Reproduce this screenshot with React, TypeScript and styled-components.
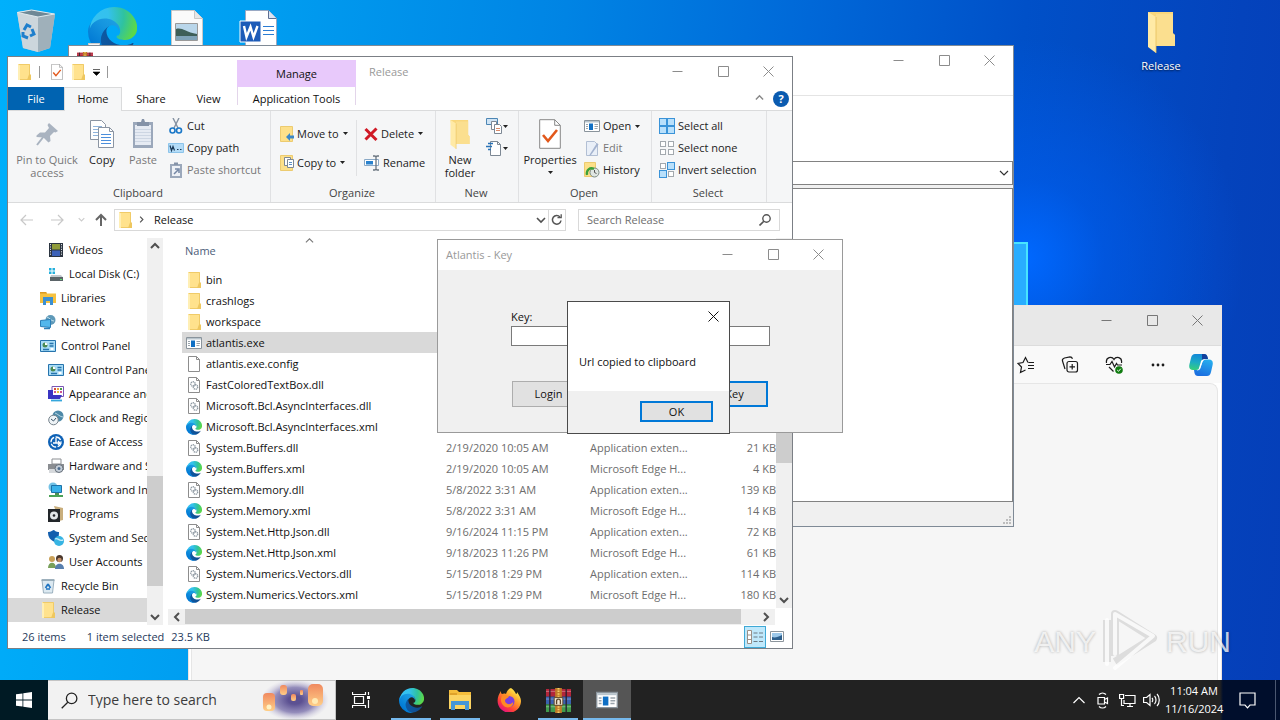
import React from "react";
import styled, { createGlobalStyle, css } from "styled-components";

const GlobalStyle = createGlobalStyle`
  *, *::before, *::after { box-sizing: border-box; }
  html, body { margin: 0; padding: 0; }
  body { font-family: "Open Sans", "Noto Sans", sans-serif; font-size: 11px; line-height: 16px; color: #111; }
  button, input, select { font: inherit; color: inherit; border-radius: 0; margin: 0; }
  button { border: 0; background: none; padding: 0; }
  svg { display: block; flex: none; }
`;

/* ---------- icons ---------- */

type IconProps = { size?: number };

const Svg = ({ w, h, vb, children }: { w: number; h: number; vb?: string; children: React.ReactNode }) => (
  <svg width={w} height={h} viewBox={vb ?? `0 0 ${w} ${h}`} fill="none" aria-hidden="true">
    {children}
  </svg>
);

const EdgeLogo = ({ size = 16 }: IconProps) => (
  <Svg w={size} h={size} vb="0 0 256 256">
    <defs>
      <linearGradient id="edgeA" x1="63" y1="177" x2="241" y2="177" gradientUnits="userSpaceOnUse">
        <stop offset="0" stopColor="#0c59a4" />
        <stop offset="1" stopColor="#114a8b" />
      </linearGradient>
      <linearGradient id="edgeB" x1="157" y1="100" x2="46" y2="222" gradientUnits="userSpaceOnUse">
        <stop offset="0" stopColor="#1b9de2" />
        <stop offset="0.3" stopColor="#1595df" />
        <stop offset="1" stopColor="#0078d4" />
      </linearGradient>
      <radialGradient id="edgeC" cx="26" cy="45" r="230" gradientUnits="userSpaceOnUse">
        <stop offset="0" stopColor="#35c1f1" />
        <stop offset="0.35" stopColor="#34c1ed" />
        <stop offset="0.7" stopColor="#2fc2a0" />
        <stop offset="1" stopColor="#5bd84a" />
      </radialGradient>
    </defs>
    <path
      fill="url(#edgeA)"
      d="M231 190a94 94 0 0 1-10 5 102 102 0 0 1-36 6c-47 0-89-32-89-75a32 32 0 0 1 17-28c-43 2-54 46-54 72 0 74 68 81 82 81 8 0 20-2 27-5l2 0a128 128 0 0 0 67-53 3 3 0 0 0-6-3Z"
    />
    <path
      fill="url(#edgeB)"
      d="M106 241a79 79 0 0 1-23-21 81 81 0 0 1 30-121c3-1 8-4 15-4a32 32 0 0 1 26 13 32 32 0 0 1 6 19c0-1 25-80-80-80-44 0-80 42-80 79a130 130 0 0 0 12 56 128 128 0 0 0 156 67 75 75 0 0 1-62-8Z"
    />
    <path
      fill="url(#edgeC)"
      d="M152 149c-1 1-3 3-3 6 0 3 2 6 5 8 15 10 42 9 42 9a60 60 0 0 0 31-9 62 62 0 0 0 30-53c0-23-8-38-11-45C226 24 183 0 136 0A128 128 0 0 0 8 126c1-37 37-66 80-66 4 0 24 0 42 10 16 8 25 19 31 29 6 11 7 24 7 30 0 5-3 13-8 20Z"
    />
  </Svg>
);

const FolderIcon = ({ size = 16 }: IconProps) => (
  <Svg w={size} h={size} vb="0 0 16 16">
    <path d="M2 0h12v11h1v5H2z" fill="#ffe28d" />
    <path d="M2.500 0.500h11v15h-11z" stroke="#f0cb68" />
    <path d="M13 10.500h2V16h-4z" fill="#eec75f" />
    <path d="M2 0l2 1.500V16H2z" fill="#ffefb5" />
  </Svg>
);

const OpenFolderLarge = ({ w, h }: { w: number; h: number }) => (
  <Svg w={w} h={h} vb="0 0 27 41">
    <path d="M0 0h25v21l2 2v11H5z" fill="#f9d77c" />
    <path d="M8 2h17v20l2 1v11H8z" fill="#fbdf8f" />
    <path d="M0 0l8 5v36l-8-6z" fill="#ffeaa6" />
    <path d="M8 5v36" stroke="#e7bf5c" strokeWidth="0.800" />
  </Svg>
);

const CheckDocIcon = ({ w, h }: { w: number; h: number }) => (
  <Svg w={w} h={h} vb="0 0 22 30">
    <path d="M0.700 0.700h15l5.600 5.600v23H0.700z" fill="#fff" stroke="#888" />
    <path d="M15.700 0.700v5.600h5.600" stroke="#888" />
    <path d="M4 16l5 6 9-11" stroke="#e2581b" strokeWidth="2.600" />
  </Svg>
);

const ExeIcon = ({ size = 16 }: IconProps) => (
  <Svg w={size} h={size} vb="0 0 16 16">
    <path d="M0.500 2.500h15v11H0.500z" fill="#fff" stroke="#8a949c" />
    <path d="M1 3h14v1.500H1z" fill="#b8c4cc" />
    <path d="M5 5.500h4v6.500H5z" fill="#0f6fc4" />
    <path d="M2 6.500h2M2 8.500h2M2 10.500h2M10.500 6.500h3.500M10.500 8.500h3.500M10.500 10.500h3" stroke="#9aa4ac" />
  </Svg>
);

const FileIcon = () => (
  <Svg w={16} h={16}>
    <path d="M2.500 0.500h8l3 3v12h-11z" fill="#fff" stroke="#8d8d8d" />
    <path d="M10.500 0.500v3h3" stroke="#8d8d8d" />
  </Svg>
);

const DllIcon = () => (
  <Svg w={16} h={16}>
    <path d="M2.500 0.500h8l3 3v12h-11z" fill="#fff" stroke="#8d8d8d" />
    <path d="M10.500 0.500v3h3" stroke="#8d8d8d" />
    <circle cx="7" cy="7" r="2.200" stroke="#8f9aa3" strokeDasharray="1.200 0.600" strokeWidth="1.400" />
    <circle cx="9.500" cy="10" r="2.200" stroke="#8f9aa3" strokeDasharray="1.200 0.600" strokeWidth="1.400" />
  </Svg>
);

const PinIcon = () => (
  <Svg w={24} h={24}>
    <path d="M14 1l9 8-2.500 1.500-1.500-0.500-4 4 0.500 5-2 1.500-5-5-7-0.500 0-1.500L5 10.500l5 0 4-4.500L12.500 3z" fill="#a9b3c0" />
    <path d="M9 14l-7 9" stroke="#a9b3c0" strokeWidth="2" />
  </Svg>
);

const CopyIcon = () => (
  <Svg w={26} h={30}>
    <path d="M1.500 1.500h11l4 4v15h-15z" fill="#fff" stroke="#8b95a3" />
    <path d="M4 7.500h9M4 10.500h9M4 13.500h9M4 16.500h9" stroke="#8fb4dc" />
    <path d="M9.500 8.500h11l4 4v16h-15z" fill="#fff" stroke="#8b95a3" />
    <path d="M20.500 8.500v4h4" stroke="#8b95a3" />
    <path d="M12 15.500h10M12 18.500h10M12 21.500h10M12 24.500h10" stroke="#4c8fdc" />
  </Svg>
);

const PasteIcon = () => (
  <Svg w={22} h={30}>
    <path d="M1 3h20v26H1z" fill="#9ba8bb" />
    <path d="M3 6h16v20H3z" fill="#e6ebf3" />
    <path d="M3 10.500h16M3 13.500h16M3 16.500h16M3 19.500h16M3 22.500h16" stroke="#cdd6e3" />
    <path d="M5 3h4l1-3h2l1 3h4v4H5z" fill="#8593a8" />
  </Svg>
);

const CutIcon = () => (
  <Svg w={16} h={16}>
    <path d="M5 0l5 10M11 0L6 10" stroke="#8592a2" strokeWidth="1.400" />
    <circle cx="4.500" cy="12.500" r="2.500" stroke="#1a78c8" strokeWidth="1.600" />
    <circle cx="11" cy="12.500" r="2.500" stroke="#1a78c8" strokeWidth="1.600" />
  </Svg>
);

const CopyPathIcon = () => (
  <Svg w={16} h={16}>
    <path d="M0.500 3.500h15v9H0.500z" fill="#b4dcf7" stroke="#8cc4ea" />
    <path d="M2 5.500l1.500 5 1.500-4 1.500 4M9 9.500h1.500M12 9.500h1.500" stroke="#1b3a57" strokeWidth="1.200" />
  </Svg>
);

const PasteShortcutIcon = () => (
  <Svg w={16} h={16}>
    <path d="M2 2h12v14H2z" fill="#9ba8bb" />
    <path d="M4 4h8v10H4z" fill="#eef1f6" />
    <path d="M6 0.500h4V3H6z" fill="#8593a8" />
    <path d="M6 12l4-4M7 7h4v4" stroke="#7487a5" strokeWidth="1.500" />
  </Svg>
);

const MoveToIcon = () => (
  <Svg w={14} h={16}>
    <path d="M0.500 0.500h12v15h-12z" fill="#fde08a" stroke="#eccb70" />
    <path d="M6 11l4-4v2.500h4v3h-4V15z" fill="#3b87c8" />
  </Svg>
);

const CopyToIcon = () => (
  <Svg w={14} h={16}>
    <path d="M0.500 0.500h12v15h-12z" fill="#fde08a" stroke="#eccb70" />
    <path d="M4.500 2.500h6v8h-6z" fill="#fff" stroke="#7d8894" />
    <path d="M7.500 4.500h6v8h-6z" fill="#fff" stroke="#7d8894" />
    <path d="M9 7.500h3M9 9.500h3" stroke="#5b8fc8" />
  </Svg>
);

const DeleteIcon = () => (
  <Svg w={14} h={16}>
    <path d="M1.500 3l11 11M12.500 2.500l-11 11" stroke="#d01a26" strokeWidth="3" />
  </Svg>
);

const RenameIcon = () => (
  <Svg w={16} h={16}>
    <path d="M0.500 4.500h14v6H0.500z" fill="#fff" stroke="#8aa9c6" />
    <path d="M2 6h7v3.500H2z" fill="#2a82cd" />
    <path d="M9 1h2l1 1 1-1h2M12 2v12M9 15h2l1-1 1 1h2" stroke="#6a7580" strokeWidth="1.300" />
  </Svg>
);

const NewItemIcon = () => (
  <Svg w={17} h={16}>
    <path d="M0.500 0.500h11v6H0.500z" fill="#cfe4f5" stroke="#4d86b4" />
    <path d="M5.500 3.500h5v8h-5z" fill="#fff" stroke="#7d8894" />
    <path d="M8.500 6.500h5l2 2v7h-7z" fill="#fff" stroke="#7d8894" />
    <path d="M10 10.500h4M10 12.500h4" stroke="#d98b6a" />
  </Svg>
);

const EasyAccessIcon = () => (
  <Svg w={17} h={16}>
    <path d="M4.500 1.500h7l3 3v11h-10z" fill="#fff" stroke="#7d8894" />
    <path d="M11.500 1.500v3h3" stroke="#7d8894" />
    <path d="M2 3.500h5M0 6.500h6M2 9.500h3" stroke="#2a73b8" strokeWidth="1.400" />
  </Svg>
);

const EditIcon = () => (
  <Svg w={16} h={16}>
    <path d="M2.500 1.500h8l3 3v11h-11z" fill="#e9eff8" stroke="#b2bfd4" />
    <path d="M13 3L6 14l-1 2 2-1L14.500 4.500z" fill="#a4b3cf" />
  </Svg>
);

const HistoryIcon = () => (
  <Svg w={16} h={16}>
    <path d="M0.500 0.500h11v14h-11z" fill="#fde08a" stroke="#eccb70" />
    <circle cx="10.500" cy="10.500" r="4.500" fill="#dfe6e2" stroke="#7d8b84" />
    <path d="M10.500 8v2.500l2 1" stroke="#555" />
    <path d="M3 13c-1-5 3-8 7-6" stroke="#3da13a" strokeWidth="2.400" />
  </Svg>
);

const GridIcon = ({ kind }: { kind: "all" | "none" | "invert" }) => {
  const on = (i: number) => kind === "all" || (kind === "invert" && (i === 1 || i === 2));
  const spots = [
    [0, 0],
    [8, 0],
    [0, 8],
    [8, 8],
  ];
  return (
    <Svg w={16} h={16}>
      {spots.map(([x, y], i) =>
        on(i) ? (
          <rect key={i} x={x + 0.5} y={y + 0.5} width="7" height="7" fill="#b9e0fb" stroke="#3a93d8" />
        ) : (
          <rect key={i} x={x + 1.5} y={y + 1.5} width="5" height="5" fill="#fff" stroke="#a3a9ae" />
        ),
      )}
    </Svg>
  );
};

const CaretDown = () => (
  <Svg w={5} h={3}>
    <path d="M0 0h5L2.500 3z" fill="#222" />
  </Svg>
);

const Chevron = ({ dir, size = 8, color = "#505050", width = 1.6 }: { dir: "up" | "down" | "left" | "right"; size?: number; color?: string; width?: number }) => {
  const d = { up: "M1 6l4-4 4 4", down: "M1 3l4 4 4-4", left: "M7 1L3 5l4 4", right: "M3 1l4 4-4 4" }[dir];
  return (
    <Svg w={size} h={size} vb="0 0 10 10">
      <path d={d} stroke={color} strokeWidth={width} />
    </Svg>
  );
};

const ArrowIcon = ({ dir, color }: { dir: "left" | "right" | "up"; color: string }) => {
  const d = { left: "M13 7H1M6 2L1 7l5 5", right: "M1 7h12M8 2l5 5-5 5", up: "M7 13V2M2 7l5-5 5 5" }[dir];
  return (
    <Svg w={14} h={14}>
      <path d={d} stroke={color} strokeWidth={dir === "up" ? 2 : 1.2} />
    </Svg>
  );
};

const RefreshIcon = () => (
  <Svg w={12} h={12}>
    <path d="M9 3a4.300 4.300 0 1 0 1 3.500" stroke="#555" strokeWidth="1.500" />
    <path d="M6.500 3.700h3.700V0.300" stroke="#555" strokeWidth="1.300" />
  </Svg>
);

const SearchIcon = ({ size = 12, color = "#555" }: { size?: number; color?: string }) => (
  <Svg w={size} h={size} vb="0 0 12 12">
    <circle cx="7.500" cy="4.500" r="3.700" stroke={color} strokeWidth={size > 12 ? 0.9 : 1.4} />
    <path d="M4.800 7.200L0.500 11.500" stroke={color} strokeWidth={size > 12 ? 0.9 : 1.6} />
  </Svg>
);

const NavGlyph = ({ kind }: { kind: string }) => {
  const art: Record<string, React.ReactNode> = {
    videos: (
      <>
        <path d="M1 1h14v14H1z" fill="#2b3440" />
        <path d="M4 2h8v5.500H4z" fill="#8f9b3b" />
        <path d="M4 8.500h8V14H4z" fill="#3d62b8" />
        <path d="M2.500 2v12M13.500 2v12" stroke="#d8dde2" strokeDasharray="1.200 1.200" />
      </>
    ),
    disk: (
      <>
        <path d="M1 2h2.500v2.500H1zM4.500 2H7v2.500H4.500zM1 5.500h2.500V8H1zM4.500 5.500H7V8H4.500z" fill="#26b0dc" />
        <path d="M3 9h10l2 2.500H2z" fill="#c2c8cc" />
        <path d="M2 11h13v4H2z" fill="#5b6468" />
        <path d="M12 13.500h2" stroke="#5be36c" />
      </>
    ),
    libraries: (
      <>
        <path d="M0 2h6l1 1.500h9V13H0z" fill="#f6c13f" />
        <path d="M0 2h6l1 1.500H0z" fill="#d99a24" />
        <path d="M3 7h10v8h-3v-4H6v4H3z" fill="#3b8fd2" />
      </>
    ),
    network: (
      <>
        <circle cx="10.500" cy="6" r="5" fill="#5f99b8" />
        <path d="M7 3c3 1 4 4 7 4" stroke="#bfe0ee" />
        <path d="M0.500 6.500l10-1v8l-10-1z" fill="#52b7ec" stroke="#2b7fb8" />
        <path d="M4 14.500h6" stroke="#2b7fb8" strokeWidth="1.500" />
      </>
    ),
    panel: (
      <>
        <path d="M0.500 2.500h15v11H0.500z" fill="#a8dcf7" stroke="#2673ac" />
        <circle cx="5" cy="7" r="2.500" fill="#4a8a54" />
        <path d="M5 7V4.500A2.500 2.500 0 0 1 7.500 7z" fill="#fff" />
        <path d="M9.500 5.500h4M9.500 8h4M3 11.500h6" stroke="#2673ac" strokeWidth="1.300" />
        <path d="M10.500 10h3v2h-3z" fill="#fff" />
      </>
    ),
    appearance: (
      <>
        <path d="M4 0.500h11.500v10H4z" fill="#fff" stroke="#7a57b5" />
        <path d="M6 2h2v2H6z" fill="#d94a3a" />
        <path d="M9 2h2v2H9z" fill="#e8a33a" />
        <path d="M12 2h2v2h-2z" fill="#4a9c4a" />
        <path d="M6 5h2v2H6zM12 5h2v2h-2z" fill="#d0558f" />
        <path d="M9 5h2v2H9z" fill="#e8c33a" />
        <path d="M0 4h5v5h9l-2 4H0z" fill="#3a35c2" />
        <path d="M3 14.500h11" stroke="#35a7dc" strokeWidth="1.800" />
      </>
    ),
    clock: (
      <>
        <circle cx="10" cy="6" r="5.500" fill="#4d89a8" />
        <path d="M7 3c3 1 5 4 8 4" stroke="#b7d7e4" />
        <circle cx="5.500" cy="10" r="4.800" fill="#eef3f6" stroke="#76838c" />
        <path d="M3 9l2.500 2 2.500-3" stroke="#3c5468" />
      </>
    ),
    ease: (
      <>
        <circle cx="8" cy="8" r="8" fill="#0f62b6" />
        <circle cx="8" cy="8" r="5" stroke="#fff" strokeWidth="1.300" strokeDasharray="6 1.500" />
        <path d="M8 4v5M5 9h7l-2-2M12 9l-2 2" stroke="#fff" strokeWidth="1.300" />
      </>
    ),
    hardware: (
      <>
        <path d="M4 1h9v5H4z" fill="#fff" stroke="#8c8f93" />
        <path d="M0 6h16v6H0z" fill="#8a8d91" />
        <path d="M1 11h9v4H1z" fill="#d6d9dc" />
        <circle cx="11" cy="10.500" r="4" fill="#c5ced8" stroke="#67707a" />
        <circle cx="11" cy="10.500" r="1.500" fill="#4c6b8d" />
      </>
    ),
    internet: (
      <>
        <circle cx="5" cy="5" r="4.500" fill="#73c2e6" />
        <path d="M3.500 3.500h10v7h-10z" fill="#38b2ea" stroke="#1d72a8" />
        <path d="M7 11h4v2H7z" fill="#4d8f56" />
        <path d="M1 14h14" stroke="#4aa356" strokeWidth="2" />
      </>
    ),
    programs: (
      <>
        <path d="M6 0l9 2v12l-4 1z" fill="#c9ae7c" />
        <path d="M0 3h12v13H0z" fill="#22262a" />
        <circle cx="6" cy="9.500" r="4" fill="#e3e7ea" />
        <circle cx="6" cy="9.500" r="1.300" fill="#22262a" />
      </>
    ),
    security: (
      <>
        <path d="M0 2c3 0 5-2 6-2 2 2 4 2 5 2 0 5-1 8-4 10C2 10 0 7 0 2z" fill="#135fae" />
        <circle cx="11" cy="11" r="5" fill="#37b4e3" />
        <path d="M7 9c3-2 4 3 8 1" stroke="#c8eefa" strokeWidth="1.400" />
      </>
    ),
    users: (
      <>
        <circle cx="4" cy="5" r="3" fill="#caa158" />
        <path d="M0 14c0-7 8-7 8 0z" fill="#79a05a" />
        <circle cx="11.500" cy="4.500" r="3.500" fill="#4a372c" />
        <circle cx="11.500" cy="6" r="2.200" fill="#c48f68" />
        <path d="M7 15c0-7 9-7 9 0z" fill="#587fae" />
      </>
    ),
    recycle: (
      <>
        <path d="M2 2h12l-1.500 13h-9z" fill="#dce9f1" stroke="#9bb0be" />
        <path d="M1.500 2h13" stroke="#8da3b1" strokeWidth="1.500" />
        <path d="M8 6l2.500 4M10 11H6M5.500 10L8 6" stroke="#2175c2" strokeWidth="1.700" />
      </>
    ),
  };
  if (kind === "folder") return <FolderIcon />;
  return (
    <Svg w={16} h={16}>
      {art[kind]}
    </Svg>
  );
};

const WinRarIcon = ({ size = 26 }: IconProps) => (
  <Svg w={size} h={size} vb="0 0 26 26">
    <path d="M0 1h26v8H0z" fill="#b3263a" />
    <path d="M0 9h26v8H0z" fill="#3a62b0" />
    <path d="M0 17h26v8H0z" fill="#3f9a4c" />
    <path d="M0 3.500h26M0 11.500h26M0 19.500h26" stroke="#fff" strokeOpacity="0.350" />
    <path d="M4 1v24M21 1v24" stroke="#2a1f30" strokeWidth="1.400" />
    <path d="M9.500 0h7v26h-7z" fill="#c07a28" />
    <path d="M13 0v9M13 19v7" stroke="#f4cf6a" strokeWidth="2" strokeDasharray="1.500 1.200" />
    <path d="M8.500 10h9v8h-9z" fill="#f0e6d2" stroke="#5d4526" />
    <path d="M11 17v-3.500a2 2 0 0 1 4 0V17" stroke="#5d4526" strokeWidth="1.400" />
  </Svg>
);

const FirefoxIcon = () => (
  <Svg w={24} h={24}>
    <defs>
      <linearGradient id="foxBody" x1="20" y1="2" x2="5" y2="22" gradientUnits="userSpaceOnUse">
        <stop offset="0" stopColor="#fff14f" />
        <stop offset="0.400" stopColor="#ff9a28" />
        <stop offset="0.750" stopColor="#ff4038" />
        <stop offset="1" stopColor="#e3157c" />
      </linearGradient>
    </defs>
    <path d="M14 0c3 2 4 4 5 6 1 0 1-1 1-2 2 3 4 6 4 9a11.700 11.700 0 0 1-23.400 0C0.500 9 2 6 4 3c0 2 0 2 1 3 1 0 2-1 4 0 1-3 2-5 5-6z" fill="url(#foxBody)" />
    <circle cx="12" cy="13.500" r="5.500" fill="#7b3fe0" />
    <path d="M5 8c3-2 5 0 7 0-1 3-4 2-4 5 1 4 6 4 8 1 1 5-6 7-9 4-3-2-4-7-2-10z" fill="#ff8a25" />
  </Svg>
);

const ExplorerTaskIcon = () => (
  <Svg w={22} h={22}>
    <path d="M0 1h8l2 2h12v17H0z" fill="#f5bd3b" />
    <path d="M0 6h22v14H0z" fill="#fcd462" />
    <path d="M2 12h18v9h-4v-5H6v5H2z" fill="#4596d8" />
    <path d="M1 5h7" stroke="#c9861a" />
  </Svg>
);

const LanternArt = () => (
  <Svg w={68} h={38}>
    <defs>
      <radialGradient id="nightGlow">
        <stop offset="0.200" stopColor="#5c5192" />
        <stop offset="0.600" stopColor="#8a82b5" stopOpacity="0.900" />
        <stop offset="1" stopColor="#cfcbe0" stopOpacity="0" />
      </radialGradient>
      <linearGradient id="lantern" x1="0" y1="0" x2="0" y2="1">
        <stop offset="0" stopColor="#f0895f" />
        <stop offset="1" stopColor="#ffcf87" />
      </linearGradient>
    </defs>
    <ellipse cx="34" cy="19" rx="34" ry="21" fill="url(#nightGlow)" />
    <rect x="2" y="12" width="12" height="18" rx="4" fill="url(#lantern)" />
    <rect x="19" y="4" width="7" height="10" rx="3" fill="url(#lantern)" />
    <rect x="30" y="13" width="5" height="7" rx="2" fill="url(#lantern)" />
    <rect x="39" y="9" width="3" height="5" rx="1" fill="url(#lantern)" />
    <rect x="47" y="3" width="15" height="22" rx="5" fill="url(#lantern)" />
    <circle cx="8" cy="26" r="2.500" fill="#fff3c4" />
    <circle cx="54" cy="20" r="3" fill="#ffeab4" />
  </Svg>
);

/* ---------- desktop ---------- */

const Screen = styled.div`
  display: grid;
  grid-template-rows: minmax(0, 1fr) 40px;
  height: 100vh;
  overflow: hidden;
`;

const Desktop = styled.main`
  position: relative;
  overflow: hidden;
  background:
    radial-gradient(circle at 80% 38%, #0068ff 0, rgba(0, 94, 240, 0.6) 80px, rgba(0, 80, 220, 0) 220px),
    linear-gradient(96deg, #00b0fb 0%, #009df0 20%, #0084e4 42%, #0068d8 60%, #0050c8 76%, #0443bc 92%, #053eb8 100%);
`;

const WallpaperPane = styled.div`
  position: absolute;
  left: 900px;
  top: 242px;
  width: 128px;
  height: 120px;
  background: #29adff;
  border: 2px solid #48e4ff;
`;

const Shortcut = styled.button<{ $x: number; $y: number }>`
  position: absolute;
  left: ${(p) => p.$x}px;
  top: ${(p) => p.$y}px;
  width: 72px;
  display: flex;
  flex-direction: column;
  align-items: center;
  gap: 5px;
  color: #fff;
  text-shadow: 0 1px 2px rgba(0, 0, 0, 0.7);
`;

const ShortcutArrow = styled.span`
  position: absolute;
  left: 12px;
  bottom: 0;
  width: 12px;
  height: 13px;
  background: #f4f4f4;
  border: 1px solid #c9c9c9;
`;

const Window = styled.section<{ $x: number; $y: number; $w: number; $h: number; $border: string }>`
  position: absolute;
  left: ${(p) => p.$x}px;
  top: ${(p) => p.$y}px;
  width: ${(p) => p.$w}px;
  height: ${(p) => p.$h}px;
  display: flex;
  flex-direction: column;
  background: #fff;
  border: 1px solid ${(p) => p.$border};
`;

const TitleBar = styled.header`
  display: flex;
  align-items: stretch;
  height: 30px;
  flex: none;
`;

const TitleText = styled.h1<{ $pad: number }>`
  flex: 1;
  align-self: center;
  margin: 0;
  padding-left: ${(p) => p.$pad}px;
  font-size: 11px;
  line-height: 16px;
  font-weight: 400;
  color: #999;
`;

const Spacer = styled.div`
  flex: 1;
`;

const ControlButton = styled.button<{ $w?: number }>`
  width: ${(p) => p.$w ?? 46}px;
  height: 28px;
  padding-right: 1px;
  display: grid;
  place-items: center;
`;

const CloseGlyph = ({ color }: { color: string }) => (
  <Svg w={11} h={11}>
    <path d="M0.500 0.500l10 10M10.500 0.500l-10 10" stroke={color} />
  </Svg>
);

const WindowControls = ({ color = "#8c8c8c" }: { color?: string }) => (
  <>
    <ControlButton aria-label="Minimize">
      <Svg w={11} h={11}>
        <path d="M0.500 5.500h10" stroke={color} />
      </Svg>
    </ControlButton>
    <ControlButton aria-label="Maximize" $w={45}>
      <Svg w={11} h={11}>
        <path d="M0.500 0.500h10v10h-10z" stroke={color} />
      </Svg>
    </ControlButton>
    <ControlButton aria-label="Close">
      <CloseGlyph color={color} />
    </ControlButton>
  </>
);

/* ---------- browser window ---------- */

const BrowserChrome = styled.div`
  display: flex;
  height: 39px;
  flex: none;
  background: #e8e8e8;
`;

const BrowserTools = styled.div`
  display: flex;
  justify-content: flex-end;
  height: 38px;
  flex: none;
  background: #f9f9f9;
  border-top: 1px solid #dcdcdc;
`;

const ToolButton = styled.button<{ $w?: number }>`
  width: ${(p) => p.$w ?? 44}px;
  display: grid;
  place-items: center;
`;

const BrowserPage = styled.div`
  flex: 1;
  margin: 0 3px 0 2px;
  background: #f6f6f6;
  border: 1px solid #e6e6e6;
  border-bottom: 0;
  border-radius: 8px 8px 0 0;
`;

const BrowserWindow = () => (
  <Window aria-label="Browser" $x={188} $y={305} $w={1034} $h={380} $border="#eee4e0">
    <BrowserChrome>
      <Spacer />
      <WindowControls color="#777" />
    </BrowserChrome>
    <BrowserTools>
      <ToolButton aria-label="Favorites">
        <Svg w={18} h={18}>
          <path d="M11 6.500L8.500 1.500 6 6.500l-5 1L4.500 11l-1 5.500L8.500 14M11.500 6.500H17M11 9.500h6M11 12.500h6" stroke="#1c1c1c" strokeWidth="1.200" />
        </Svg>
      </ToolButton>
      <ToolButton aria-label="Collections">
        <Svg w={18} h={18}>
          <path d="M4 13L1.500 5C1 3.500 2 2.500 3.500 2L9 0.800c1.500 0 2 0.500 2.500 2" stroke="#1c1c1c" strokeWidth="1.200" />
          <rect x="6" y="5.500" width="10.500" height="10.500" rx="2" stroke="#1c1c1c" strokeWidth="1.200" />
          <path d="M11.200 8v5.500M8.500 10.800H14" stroke="#1c1c1c" strokeWidth="1.200" />
        </Svg>
      </ToolButton>
      <ToolButton aria-label="Browser essentials">
        <Svg w={18} h={18}>
          <path d="M1.500 7C0.500 1 7 0 9 3.500 11 0 17.500 1 16.500 7M4 11l4.500 4.500M1 8.500h4l2-3 2.500 5.500 2-3.500 1 1.500H17" stroke="#1c1c1c" strokeWidth="1.200" />
          <circle cx="14" cy="14" r="3.800" fill="#107c10" />
          <path d="M12.200 14l1.300 1.300 2.300-2.600" stroke="#fff" />
        </Svg>
      </ToolButton>
      <ToolButton aria-label="Settings and more">
        <Svg w={14} h={4}>
          <circle cx="2" cy="2" r="1.400" fill="#1c1c1c" />
          <circle cx="7" cy="2" r="1.400" fill="#1c1c1c" />
          <circle cx="12" cy="2" r="1.400" fill="#1c1c1c" />
        </Svg>
      </ToolButton>
      <ToolButton $w={41} aria-label="Copilot">
        <Svg w={24} h={22}>
          <defs>
            <linearGradient id="copA" x1="6" y1="0" x2="4" y2="16" gradientUnits="userSpaceOnUse">
              <stop offset="0" stopColor="#1388d8" />
              <stop offset="0.500" stopColor="#1cabc4" />
              <stop offset="1" stopColor="#37cf7a" />
            </linearGradient>
            <linearGradient id="copB" x1="20" y1="4" x2="14" y2="22" gradientUnits="userSpaceOnUse">
              <stop offset="0" stopColor="#28b5f0" />
              <stop offset="1" stopColor="#1b6fe0" />
            </linearGradient>
          </defs>
          <path d="M6 0h9c2 0 3 1 3.500 3l0.500 2h-3c-2 0-3 1-3.500 3L11 13c-0.500 2-2 3-4 3H4c-3 0-4.500-2-3.500-6L2 4c0.800-3 2-4 4-4z" fill="url(#copA)" />
          <path d="M18 22H9c-2 0-3-1-3.500-3L5 16h3c2 0 3-1 3.500-3L13 9c0.500-2 2-3.500 4-3.500h3c3 0 4.500 2 3.500 6L22 18c-0.800 3-2 4-4 4z" fill="url(#copB)" />
          <path d="M13 0h2c2 0 3 1 3.500 3l0.500 2h-3c-1.500 0-2.500 0.500-3 2z" fill="#123f9c" />
          <path d="M14.500 5.500c-2 0-2.500 1.500-3 3.500l-1.500 5c-0.300 1.500-0.800 2-2.500 2.500 3 0 3.800-1.500 4.300-3.500l1.500-4.500c0.500-1.500 1-2.500 2.200-3z" fill="#fff" />
        </Svg>
      </ToolButton>
    </BrowserTools>
    <BrowserPage />
  </Window>
);

/* ---------- archive window ---------- */

const ArchiveMenu = styled.div`
  flex: none;
  height: 20px;
  border-bottom: 1px solid #e4e4e4;
`;

const ArchiveTools = styled.div`
  flex: none;
  height: 65px;
`;

const PathSelectWrap = styled.div`
  position: relative;
  flex: none;
  height: 27px;
  padding-bottom: 4px;
  background: #f0f0f0;
`;

const PathSelect = styled.select`
  appearance: none;
  display: block;
  width: 100%;
  height: 24px;
  background: #fff;
  border: 1px solid #828282;
`;

const SelectArrow = styled.span`
  position: absolute;
  right: 4px;
  top: 7px;
  pointer-events: none;
`;

const ArchiveList = styled.div`
  flex: 1;
  border: 1px solid #828282;
`;

const ArchiveStatus = styled.footer`
  flex: none;
  height: 24px;
  display: flex;
  justify-content: flex-end;
  align-items: flex-end;
  padding: 2px;
  background: #f0f0f0;
`;

const ArchiveTitle = styled(TitleBar)`
  padding-left: 8px;
`;

const TitleIcon = styled.span`
  padding-top: 6px;
`;

const ArchiveWindow = () => (
  <Window aria-label="Archive" $x={68} $y={45} $w={946} $h={482} $border="#7f8a96">
    <ArchiveTitle>
      <TitleIcon>
        <WinRarIcon size={16} />
      </TitleIcon>
      <Spacer />
      <WindowControls />
    </ArchiveTitle>
    <ArchiveMenu />
    <ArchiveTools />
    <PathSelectWrap>
      <PathSelect aria-label="Path" />
      <SelectArrow>
        <Chevron dir="down" size={10} color="#333" width={1.2} />
      </SelectArrow>
    </PathSelectWrap>
    <ArchiveList />
    <ArchiveStatus>
      <Svg w={8} h={8}>
        <path d="M6 0h2v2H6zM3 3h2v2H3zM6 3h2v2H6zM0 6h2v2H0zM3 6h2v2H3zM6 6h2v2H6z" fill="#bdbdbd" />
      </Svg>
    </ArchiveStatus>
  </Window>
);

/* ---------- file explorer ---------- */

const QuickAccess = styled.div`
  width: 229px;
  flex: none;
  display: flex;
  align-items: center;
  gap: 7px;
  padding-left: 8px;
`;

const QuickRule = styled.span<{ $after?: number }>`
  width: 1px;
  height: 12px;
  margin-right: ${(p) => p.$after ?? 0}px;
  background: #999;
`;

const Manage = styled.div`
  width: 119px;
  align-self: flex-end;
  height: 27px;
  padding-top: 1px;
  line-height: 26px;
  text-align: center;
  background: #e8c9fb;
`;

const TabRow = styled.nav`
  flex: none;
  display: flex;
  height: 23px;
`;

const tabBase = css<{ $w: number }>`
  width: ${(p) => p.$w}px;
  text-align: center;
  line-height: 22px;
`;

const FileTab = styled.button<{ $w: number }>`
  ${tabBase}
  background: #0063b1;
  color: #fff;
`;

const Tab = styled.button<{ $w: number; $active?: boolean }>`
  ${tabBase}
  ${(p) =>
    p.$active &&
    css`
      height: 24px;
      background: #f5f6f7;
      border: 1px solid #dadbdc;
      border-bottom: 0;
      z-index: 1;
      line-height: 20px;
      padding-bottom: 1px;
    `}
`;

const ToolTab = styled.button<{ $w: number }>`
  ${tabBase}
  height: 18px;
  padding-top: 6px;
  line-height: 12px;
  border: 1px solid #e3d5ea;
  border-width: 0 1px;
`;

const RibbonToggle = styled.button`
  width: 28px;
  display: grid;
  place-items: center;
`;

const HelpButton = styled.button`
  width: 16px;
  height: 16px;
  align-self: center;
  margin-right: 3px;
  border-radius: 8px;
  background: #0a5bb0;
  color: #fff;
  font-weight: 700;
`;

const Ribbon = styled.div`
  flex: none;
  display: flex;
  height: 93px;
  background: #f5f6f7;
  border: 1px solid #dadbdc;
  border-width: 1px 0;
`;

const Group = styled.section<{ $w: number }>`
  width: ${(p) => p.$w}px;
  flex: none;
  display: flex;
  flex-direction: column;
  border-right: 1px solid #e0e1e3;
`;

const GroupBody = styled.div<{ $pad: number }>`
  flex: 1;
  display: flex;
  padding-left: ${(p) => p.$pad}px;
`;

const GroupLabel = styled.h2`
  margin: 0;
  height: 19px;
  padding-right: 2px;
  font-size: 11px;
  font-weight: 400;
  line-height: 20px;
  text-align: center;
  color: #444;
`;

const BigButton = styled.button<{ $w: number }>`
  width: ${(p) => p.$w}px;
  display: flex;
  flex-direction: column;
  align-items: center;
  padding-top: 8px;
  line-height: 13px;
  color: #222;
  &:disabled {
    color: #777;
  }
`;

const BigIcon = styled.span`
  height: 34px;
  display: grid;
  align-items: center;
  padding-bottom: 4px;
`;

const BigCaret = styled.span`
  padding-top: 5px;
`;

const SmallColumn = styled.div<{ $w?: number; $row: number; $top: number }>`
  ${(p) => (p.$w ? `width: ${p.$w}px;` : "flex: 1;")}
  display: grid;
  grid-auto-rows: ${(p) => p.$row}px;
  align-content: start;
  padding: ${(p) => p.$top}px 0 0 4px;
`;

const RibbonRule = styled.span`
  width: 1px;
  height: 56px;
  margin: 9px 3px 0 0;
  background: #e0e1e3;
`;

const SmallButton = styled.button`
  display: flex;
  align-items: center;
  gap: 3px;
  white-space: nowrap;
  color: #222;
  &:disabled {
    color: #777;
  }
`;

const IconMenuButton = styled(SmallButton)`
  gap: 0;
`;

const CaretBox = styled.span`
  padding-left: 1px;
`;

const AddressRow = styled.div`
  flex: none;
  display: flex;
  align-items: center;
  height: 35px;
  padding: 0 12px 2px 4px;
`;

const NavButton = styled.button<{ $w: number }>`
  width: ${(p) => p.$w}px;
  height: 22px;
  display: grid;
  place-items: center;
`;

const AddressBox = styled.div`
  flex: 1;
  display: flex;
  align-items: center;
  height: 22px;
  margin-left: 3px;
  padding-left: 2px;
  border: 1px solid #d9d9d9;
`;

const Crumb = styled.button`
  padding: 0 5px;
`;

const RefreshButton = styled(NavButton)`
  height: 20px;
  border-left: 1px solid #d9d9d9;
`;

const SearchBox = styled.label`
  width: 202px;
  height: 22px;
  margin-left: 12px;
  padding: 0 8px;
  display: flex;
  align-items: center;
  border: 1px solid #d9d9d9;
`;

const PlainInput = styled.input<{ $size: number; $color: string }>`
  flex: 1;
  min-width: 0;
  padding: 0;
  border: 0;
  outline: 0;
  background: none;
  font-size: ${(p) => p.$size}px;
  &::placeholder {
    color: ${(p) => p.$color};
    opacity: 1;
  }
`;

const Content = styled.div`
  flex: 1;
  min-height: 0;
  display: flex;
`;

const Sidebar = styled.nav`
  width: 139px;
  overflow: hidden;
`;

const SideItem = styled.a<{ $level: number; $current?: boolean }>`
  display: flex;
  align-items: center;
  gap: 5px;
  height: 24px;
  padding-left: ${(p) => (p.$level === 1 ? 32 : 40)}px;
  white-space: nowrap;
  color: #111;
  text-decoration: none;
  background: ${(p) => (p.$current ? "#d9d9d9" : "none")};
`;

const VScroll = styled.div<{ $before: number }>`
  width: 16px;
  display: grid;
  grid-template-rows: 17px ${(p) => p.$before}fr auto 1fr 17px;
  justify-items: center;
  align-items: center;
  background: #f0f0f0;
`;

const VThumb = styled.span<{ $h: number }>`
  grid-row: 3;
  width: 16px;
  height: ${(p) => p.$h}px;
  background: #cdcdcd;
`;

const EndSlot = styled.span`
  grid-row: 5;
`;

const Listing = styled.div`
  flex: 1;
  min-width: 0;
  display: flex;
  flex-direction: column;
  padding-left: 5px;
`;

const ListBody = styled.div`
  display: flex;
  height: 370px;
`;

const TableWrap = styled.div`
  flex: 1;
  min-width: 0;
  padding-left: 14px;
  overflow: hidden;
`;

const Table = styled.table`
  width: 100%;
  table-layout: fixed;
  border-collapse: collapse;
  white-space: nowrap;
`;

const Th = styled.th<{ $w?: number }>`
  ${(p) => p.$w && `width: ${p.$w}px;`}
  height: 31px;
  padding: 0 0 5px 3px;
  text-align: left;
  font-weight: 400;
  color: #4c607a;
`;

const SortMark = styled.span`
  position: absolute;
  left: 305px;
  top: 237px;
`;

const Tr = styled.tr<{ $selected?: boolean }>`
  height: 21px;
  background: ${(p) => (p.$selected ? "#d9d9d9" : "none")};
`;

const Td = styled.td<{ $right?: boolean }>`
  height: 21px;
  padding: 0 0 0 4px;
  line-height: 16px;
  overflow: hidden;
  color: #6d6d6d;
  text-align: ${(p) => (p.$right ? "right" : "left")};
`;

const FileName = styled.span`
  display: flex;
  align-items: center;
  gap: 4px;
  color: #111;
`;

const HScroll = styled.div`
  height: 16px;
  margin: 1px 17px 0 0;
  display: flex;
  background: #f0f0f0;
`;

const HEnd = styled.span<{ $w: number; $right?: boolean }>`
  width: ${(p) => p.$w}px;
  display: grid;
  align-items: center;
  justify-items: ${(p) => (p.$right ? "end" : "center")};
  padding-right: ${(p) => (p.$right ? 4 : 0)}px;
`;

const HThumb = styled.span`
  flex: 1;
  height: 15px;
  background: #cdcdcd;
`;

const StatusBar = styled.footer`
  flex: none;
  height: 23px;
  display: flex;
  align-items: center;
  padding: 0 4px 0 14px;
  color: #1e395b;
`;

const StatusText = styled.span<{ $gap: number }>`
  margin-right: ${(p) => p.$gap}px;
`;

const ViewButton = styled.button<{ $active?: boolean }>`
  width: 22px;
  height: 22px;
  display: grid;
  place-items: center;
  background: ${(p) => (p.$active ? "#bfe8fb" : "none")};
  border: ${(p) => (p.$active ? "1px solid #3fa9d6" : "0")};
`;

const navItems: [string, string, number][] = [
  ["Videos", "videos", 2],
  ["Local Disk (C:)", "disk", 2],
  ["Libraries", "libraries", 1],
  ["Network", "network", 1],
  ["Control Panel", "panel", 1],
  ["All Control Panel Items", "panel", 2],
  ["Appearance and Personalization", "appearance", 2],
  ["Clock and Region", "clock", 2],
  ["Ease of Access", "ease", 2],
  ["Hardware and Sound", "hardware", 2],
  ["Network and Internet", "internet", 2],
  ["Programs", "programs", 2],
  ["System and Security", "security", 2],
  ["User Accounts", "users", 2],
  ["Recycle Bin", "recycle", 1],
  ["Release", "folder", 1],
];

type FileRow = { name: string; kind: "folder" | "exe" | "file" | "dll" | "xml"; date?: string; size?: string };

const files: FileRow[] = [
  { name: "bin", kind: "folder" },
  { name: "crashlogs", kind: "folder" },
  { name: "workspace", kind: "folder" },
  { name: "atlantis.exe", kind: "exe" },
  { name: "atlantis.exe.config", kind: "file" },
  { name: "FastColoredTextBox.dll", kind: "dll" },
  { name: "Microsoft.Bcl.AsyncInterfaces.dll", kind: "dll" },
  { name: "Microsoft.Bcl.AsyncInterfaces.xml", kind: "xml" },
  { name: "System.Buffers.dll", kind: "dll", date: "2/19/2020 10:05 AM", size: "21 KB" },
  { name: "System.Buffers.xml", kind: "xml", date: "2/19/2020 10:05 AM", size: "4 KB" },
  { name: "System.Memory.dll", kind: "dll", date: "5/8/2022 3:31 AM", size: "139 KB" },
  { name: "System.Memory.xml", kind: "xml", date: "5/8/2022 3:31 AM", size: "14 KB" },
  { name: "System.Net.Http.Json.dll", kind: "dll", date: "9/16/2024 11:15 PM", size: "72 KB" },
  { name: "System.Net.Http.Json.xml", kind: "xml", date: "9/18/2023 11:26 PM", size: "61 KB" },
  { name: "System.Numerics.Vectors.dll", kind: "dll", date: "5/15/2018 1:29 PM", size: "114 KB" },
  { name: "System.Numerics.Vectors.xml", kind: "xml", date: "5/15/2018 1:29 PM", size: "180 KB" },
];

const fileIcons = {
  folder: <FolderIcon />,
  exe: <ExeIcon />,
  file: <FileIcon />,
  dll: <DllIcon />,
  xml: <EdgeLogo />,
};

const Small = ({ icon, label, caret, disabled }: { icon: React.ReactNode; label: string; caret?: boolean; disabled?: boolean }) => (
  <SmallButton disabled={disabled}>
    {icon}
    {label}
    {caret && (
      <CaretBox>
        <CaretDown />
      </CaretBox>
    )}
  </SmallButton>
);

const Explorer = () => (
  <Window aria-label="Release" $x={7} $y={56} $w={786} $h={593} $border="#7b7f85">
    <TitleBar>
      <QuickAccess>
        <FolderIcon />
        <QuickRule $after={4} />
        <CheckDocIcon w={12} h={16} />
        <FolderIcon />
        <Svg w={7} h={7}>
          <path d="M0 0.500h7M0 3h7L3.500 6.500z" stroke="#000" strokeWidth="0.600" fill="#000" />
        </Svg>
        <QuickRule />
      </QuickAccess>
      <Manage>Manage</Manage>
      <TitleText $pad={13}>Release</TitleText>
      <WindowControls />
    </TitleBar>
    <TabRow>
      <FileTab $w={56}>File</FileTab>
      <Tab $w={58} $active>
        Home
      </Tab>
      <Tab $w={58}>Share</Tab>
      <Tab $w={57}>View</Tab>
      <ToolTab $w={119}>Application Tools</ToolTab>
      <Spacer />
      <RibbonToggle aria-label="Collapse ribbon">
        <Chevron dir="up" size={9} color="#888" />
      </RibbonToggle>
      <HelpButton aria-label="Help">?</HelpButton>
    </TabRow>
    <Ribbon>
      <Group $w={263}>
        <GroupBody $pad={4}>
          <BigButton $w={70} disabled>
            <BigIcon>
              <PinIcon />
            </BigIcon>
            <span>Pin to Quick</span>
            <span>access</span>
          </BigButton>
          <BigButton $w={40}>
            <BigIcon>
              <CopyIcon />
            </BigIcon>
            Copy
          </BigButton>
          <BigButton $w={42} disabled>
            <BigIcon>
              <PasteIcon />
            </BigIcon>
            Paste
          </BigButton>
          <SmallColumn $row={22} $top={4}>
            <Small icon={<CutIcon />} label="Cut" />
            <Small icon={<CopyPathIcon />} label="Copy path" />
            <Small icon={<PasteShortcutIcon />} label="Paste shortcut" disabled />
          </SmallColumn>
        </GroupBody>
        <GroupLabel>Clipboard</GroupLabel>
      </Group>
      <Group $w={165}>
        <GroupBody $pad={5}>
          <SmallColumn $w={80} $row={29} $top={8}>
            <Small icon={<MoveToIcon />} label="Move to" caret />
            <Small icon={<CopyToIcon />} label="Copy to" caret />
          </SmallColumn>
          <RibbonRule />
          <SmallColumn $row={29} $top={8}>
            <Small icon={<DeleteIcon />} label="Delete" caret />
            <Small icon={<RenameIcon />} label="Rename" />
          </SmallColumn>
        </GroupBody>
        <GroupLabel>Organize</GroupLabel>
      </Group>
      <Group $w={83}>
        <GroupBody $pad={2}>
          <BigButton $w={44}>
            <BigIcon>
              <OpenFolderLarge w={20} h={29} />
            </BigIcon>
            <span>New</span>
            <span>folder</span>
          </BigButton>
          <SmallColumn $row={22} $top={4}>
            <IconMenuButton aria-label="New item">
              <NewItemIcon />
              <CaretDown />
            </IconMenuButton>
            <IconMenuButton aria-label="Easy access">
              <EasyAccessIcon />
              <CaretDown />
            </IconMenuButton>
          </SmallColumn>
        </GroupBody>
        <GroupLabel>New</GroupLabel>
      </Group>
      <Group $w={133}>
        <GroupBody $pad={1}>
          <BigButton $w={60}>
            <BigIcon>
              <CheckDocIcon w={22} h={30} />
            </BigIcon>
            Properties
            <BigCaret>
              <CaretDown />
            </BigCaret>
          </BigButton>
          <SmallColumn $row={22} $top={4}>
            <Small icon={<ExeIcon />} label="Open" caret />
            <Small icon={<EditIcon />} label="Edit" disabled />
            <Small icon={<HistoryIcon />} label="History" />
          </SmallColumn>
        </GroupBody>
        <GroupLabel>Open</GroupLabel>
      </Group>
      <Group $w={115}>
        <GroupBody $pad={3}>
          <SmallColumn $row={22} $top={4}>
            <Small icon={<GridIcon kind="all" />} label="Select all" />
            <Small icon={<GridIcon kind="none" />} label="Select none" />
            <Small icon={<GridIcon kind="invert" />} label="Invert selection" />
          </SmallColumn>
        </GroupBody>
        <GroupLabel>Select</GroupLabel>
      </Group>
    </Ribbon>
    <AddressRow>
      <NavButton $w={30} aria-label="Back">
        <ArrowIcon dir="left" color="#c8c8c8" />
      </NavButton>
      <NavButton $w={30} aria-label="Forward">
        <ArrowIcon dir="right" color="#c8c8c8" />
      </NavButton>
      <NavButton $w={18} aria-label="Recent locations">
        <Chevron dir="down" size={7} color="#ccc" />
      </NavButton>
      <NavButton $w={21} aria-label="Up">
        <ArrowIcon dir="up" color="#666" />
      </NavButton>
      <AddressBox>
        <FolderIcon />
        <NavButton $w={16} aria-label="Show folders">
          <Chevron dir="right" size={7} />
        </NavButton>
        <Crumb>Release</Crumb>
        <Spacer />
        <NavButton $w={14} aria-label="Previous locations">
          <Chevron dir="down" size={10} />
        </NavButton>
        <RefreshButton $w={17} aria-label="Refresh">
          <RefreshIcon />
        </RefreshButton>
      </AddressBox>
      <SearchBox>
        <PlainInput $size={11} $color="#6d6d6d" placeholder="Search Release" aria-label="Search Release" />
        <SearchIcon />
      </SearchBox>
    </AddressRow>
    <Content>
      <Sidebar>
        {navItems.map(([label, kind, level]) => (
          <SideItem key={label} href="#" $level={level} $current={label === "Release"}>
            <NavGlyph kind={kind} />
            {label}
          </SideItem>
        ))}
      </Sidebar>
      <VScroll $before={10}>
        <Chevron dir="up" size={10} width={2} />
        <VThumb $h={110} />
        <EndSlot>
          <Chevron dir="down" size={10} width={2} />
        </EndSlot>
      </VScroll>
      <Listing>
        <ListBody>
          <TableWrap>
            <Table>
              <thead>
                <tr>
                  <Th $w={260}>Name</Th>
                  <Th $w={144} aria-label="Date modified" />
                  <Th $w={120} aria-label="Type" />
                  <Th aria-label="Size" />
                </tr>
              </thead>
              <tbody>
                {files.map((f) => (
                  <Tr key={f.name} $selected={f.kind === "exe"}>
                    <Td>
                      <FileName>
                        {fileIcons[f.kind]}
                        {f.name}
                      </FileName>
                    </Td>
                    <Td>{f.date}</Td>
                    <Td>{f.date && (f.kind === "dll" ? "Application exten..." : "Microsoft Edge H...")}</Td>
                    <Td $right>{f.size}</Td>
                  </Tr>
                ))}
              </tbody>
            </Table>
          </TableWrap>
          <VScroll $before={0}>
            <Chevron dir="up" size={10} width={2} />
            <VThumb $h={208} />
            <EndSlot>
              <Chevron dir="down" size={10} width={2} />
            </EndSlot>
          </VScroll>
        </ListBody>
        <HScroll>
          <HEnd $w={17}>
            <Chevron dir="left" size={10} width={2} />
          </HEnd>
          <HThumb />
          <HEnd $w={34} $right>
            <Chevron dir="right" size={10} width={2} />
          </HEnd>
        </HScroll>
      </Listing>
    </Content>
    <StatusBar>
      <StatusText $gap={21}>26 items</StatusText>
      <StatusText $gap={7}>1 item selected</StatusText>
      <StatusText $gap={0}>23.5 KB</StatusText>
      <Spacer />
      <ViewButton $active aria-label="Details view">
        <Svg w={16} h={14}>
          <path d="M0.500 0.500h4v13h-4zM0.500 5h4M0.500 9.500h4" stroke="#9b8f86" fill="#fff" />
          <path d="M6.500 3h4M12 3h4M6.500 7h4M12 7h4M6.500 11.500h4M12 11.500h4" stroke="#6c7a84" />
        </Svg>
      </ViewButton>
      <ViewButton aria-label="Large icons view">
        <Svg w={14} h={11}>
          <path d="M0.500 0.500h13v10H0.500z" fill="#fff" stroke="#8c959c" />
          <path d="M2 2h10v7H2z" fill="#9cc8ea" />
          <path d="M2 9V6c3 1 6 0 10-2v5z" fill="#2d5f8c" />
        </Svg>
      </ViewButton>
    </StatusBar>
  </Window>
);

/* ---------- key dialog and message box ---------- */

const KeyForm = styled.form`
  flex: 1;
  display: flex;
  flex-direction: column;
  padding: 39px 72px 0 73px;
  background: #f0f0f0;
`;

const KeyLabel = styled.label`
  margin-bottom: 1px;
`;

const KeyInput = styled.input`
  height: 20px;
  background: #fff;
  border: 1px solid #7a7a7a;
`;

const ButtonRow = styled.div`
  display: flex;
  justify-content: space-between;
  margin: 35px 2px 0 1px;
`;

const PushButton = styled.button<{ $w: number; $h: number; $focus?: boolean }>`
  width: ${(p) => p.$w}px;
  height: ${(p) => p.$h}px;
  background: #e1e1e1;
  border: ${(p) => (p.$focus ? "2px solid #0078d7" : "1px solid #adadad")};
  line-height: 16px;
`;

const KeyDialog = () => (
  <Window aria-label="Atlantis - Key" $x={437} $y={239} $w={406} $h={194} $border="#9a9a9a">
    <TitleBar>
      <TitleText $pad={8}>Atlantis - Key</TitleText>
      <WindowControls />
    </TitleBar>
    <KeyForm>
      <KeyLabel htmlFor="key">Key:</KeyLabel>
      <KeyInput id="key" />
      <ButtonRow>
        <PushButton type="button" $w={73} $h={26}>
          Login
        </PushButton>
        <PushButton type="button" $w={88} $h={26} $focus>
          Get Key
        </PushButton>
      </ButtonRow>
    </KeyForm>
  </Window>
);

const MessageTitle = styled(TitleBar)`
  justify-content: flex-end;
`;

const MessageText = styled.p`
  flex: 1;
  margin: 0;
  padding: 22px 0 0 11px;
`;

const MessageFooter = styled.footer`
  height: 42px;
  display: flex;
  justify-content: flex-end;
  align-items: flex-start;
  padding: 10px 16px 0 0;
  background: #f0f0f0;
`;

const MessageBox = () => (
  <Window role="dialog" aria-label="Message" $x={567} $y={301} $w={163} $h={133} $border="#4a4a4a">
    <MessageTitle>
      <ControlButton $w={30} aria-label="Close">
        <CloseGlyph color="#111" />
      </ControlButton>
    </MessageTitle>
    <MessageText>Url copied to clipboard</MessageText>
    <MessageFooter>
      <PushButton $w={73} $h={21} $focus>
        OK
      </PushButton>
    </MessageFooter>
  </Window>
);

/* ---------- watermark ---------- */

const Watermark = styled.div`
  position: absolute;
  right: 49px;
  bottom: 6px;
  display: flex;
  align-items: center;
  gap: 7px;
  font-family: "Liberation Sans", sans-serif;
  font-size: 30px;
  line-height: 64px;
  color: rgba(255, 255, 255, 0.75);
  text-shadow: 0 0 3px rgba(0, 0, 0, 0.32);
`;

/* ---------- taskbar ---------- */

const Taskbar = styled.footer`
  display: flex;
  background: linear-gradient(90deg, #001a26 0, #001a26 48px, #222 190px, #222 calc(100% - 60px), #000e2c calc(100% - 57px), #000e2c 100%);
  color: #fff;
`;

const StartButton = styled.button`
  width: 48px;
  display: grid;
  place-items: center;
  background: #001a24;
`;

const TaskSearch = styled.label`
  width: 288px;
  display: flex;
  align-items: center;
  gap: 10px;
  padding: 0 6px 0 13px;
  background: #f2f2f2;
  border: 1px solid #c4c4c4;
  border-left: 0;
  color: #222;
`;

const TaskButton = styled.button<{ $w?: number; $open?: boolean; $active?: boolean }>`
  width: ${(p) => p.$w ?? 48}px;
  margin-right: 1px;
  display: grid;
  place-items: center;
  background: ${(p) => (p.$active ? "#555" : "none")};
  ${(p) => p.$open && "background: linear-gradient(#76b9ed, #76b9ed) 50% 100% / 40px 2px no-repeat;"}
  ${(p) => p.$active && "box-shadow: inset 0 -2px #76b9ed;"}
`;

const TrayButton = styled.button<{ $w: number }>`
  width: ${(p) => p.$w}px;
  display: grid;
  place-items: center;
`;

const Clock = styled.div`
  width: 58px;
  margin-left: 2px;
  padding-top: 2px;
  text-align: center;
  line-height: 18px;
  white-space: nowrap;
`;

const ShowDesktop = styled.button`
  width: 5px;
  margin-left: 4px;
  border-left: 1px solid #4a5770;
`;

const white = { stroke: "#fff", strokeWidth: 1.2 };

const TaskbarView = () => (
  <Taskbar>
    <StartButton aria-label="Start">
      <Svg w={16} h={16}>
        <path d="M0 2.300L6.500 1.400v6.200H0zM7.300 1.300L16 0v7.600H7.300zM0 8.400h6.500v6.200L0 13.700zM7.300 8.400H16V16l-8.700-1.200z" fill="#fff" />
      </Svg>
    </StartButton>
    <TaskSearch>
      <SearchIcon size={17} color="#222" />
      <PlainInput $size={14} $color="#3c3c3c" placeholder="Type here to search" aria-label="Type here to search" />
      <LanternArt />
    </TaskSearch>
    <TaskButton $w={50} aria-label="Task view">
      <Svg w={18} h={16}>
        <path d="M2.500 4.500h9v7h-9zM0.500 0v2.500h13V0M0.500 16v-2.500h13V16M16.500 0v3M16.500 8v8" {...white} />
        <path d="M15 4h3v3h-3z" fill="#fff" />
      </Svg>
    </TaskButton>
    <TaskButton $open aria-label="Microsoft Edge">
      <EdgeLogo size={25} />
    </TaskButton>
    <TaskButton $open aria-label="File Explorer">
      <ExplorerTaskIcon />
    </TaskButton>
    <TaskButton aria-label="Firefox">
      <FirefoxIcon />
    </TaskButton>
    <TaskButton $open aria-label="WinRAR">
      <WinRarIcon size={25} />
    </TaskButton>
    <TaskButton $active aria-label="Atlantis">
      <ExeIcon size={22} />
    </TaskButton>
    <Spacer />
    <TrayButton $w={24} aria-label="Show hidden icons">
      <Svg w={12} h={8}>
        <path d="M0.500 7L6 1.500 11.500 7" {...white} />
      </Svg>
    </TrayButton>
    <TrayButton $w={24} aria-label="Meet Now">
      <Svg w={14} h={17}>
        <path d="M2 5.500h6.500v6.500H2zM8.500 7.500L11.500 6v5.500L8.500 10M3 2.500c2-2 5-2 7 0M3 14.500c2 2 5 2 7 0" {...white} />
      </Svg>
    </TrayButton>
    <TrayButton $w={24} aria-label="Network">
      <Svg w={17} h={15}>
        <path d="M6 2.500h10v8H5V7M8 13.500h6M11 10.500v3M0.600 1.500h4v4h-4zM2.500 5.500v7H5" {...white} />
      </Svg>
    </TrayButton>
    <TrayButton $w={24} aria-label="Volume">
      <Svg w={17} h={14}>
        <path d="M0.600 4.500h3L7 1.500v11L3.600 9.500h-3zM9 5c1 1 1 3 0 4M11.500 3c2 2 2 6 0 8M14 1c3 3 3 9 0 12" {...white} />
      </Svg>
    </TrayButton>
    <Clock>
      <div>11:04 AM</div>
      <div>11/16/2024</div>
    </Clock>
    <TrayButton $w={48} aria-label="Notifications">
      <Svg w={17} h={17}>
        <path d="M1 1h15v12h-5l-2.500 2.800L6 13H1z" {...white} />
      </Svg>
    </TrayButton>
    <ShowDesktop aria-label="Show desktop" />
  </Taskbar>
);

/* ---------- desktop icons ---------- */

const RecycleBinLarge = () => (
  <Svg w={38} h={43}>
    <path d="M0 3l14-2 24 4-5 34-12 4-15-4z" fill="#bccad3" />
    <path d="M0 3l21 5v35l-15-4z" fill="#ccd6dc" />
    <path d="M21 8l17-3-5 34-12 4z" fill="#9fb0ba" />
    <path d="M0.500 3.500l14-2.500 23 4-16.500 3z" fill="#6e8896" stroke="#dfe9ee" />
    <path d="M7 21l3-5 4 2M15 20l2 5-4 2M11 29l-5-2 0-4" stroke="#1f7fcc" strokeWidth="3" />
  </Svg>
);

const PictureFile = () => (
  <Svg w={32} h={42}>
    <path d="M0.500 0.500h23l8 8v33H0.500z" fill="#fafafa" stroke="#c7c7c7" />
    <path d="M23.500 0.500v8h8" fill="#e6e6e6" stroke="#c7c7c7" />
    <path d="M4.500 13.500h22v17h-22z" fill="#b9d6ea" stroke="#999" />
    <path d="M5 19c6-2 9 3 21 5v6H5z" fill="#3e5f58" />
    <path d="M5 26h21v4H5z" fill="#7fa3b8" />
  </Svg>
);

const WordFile = () => (
  <Svg w={40} h={42}>
    <path d="M6.500 0.500h23l8 8v33h-31z" fill="#fff" stroke="#9aa9c4" />
    <path d="M29.500 0.500v8h8" fill="#dbe4f3" stroke="#5e6f92" />
    <path d="M24 16.500h11M24 20.500h11M24 24.500h11" stroke="#2b7cd3" />
    <path d="M1 11h21v21H1z" fill="#1d5bb8" stroke="#fff" />
    <path d="M5 16l2.500 11L11.500 17l3 10L18.500 16" stroke="#fff" strokeWidth="2.400" />
  </Svg>
);

export default function App() {
  return (
    <>
      <GlobalStyle />
      <Screen>
        <Desktop>
          <WallpaperPane />
          <Shortcut $x={0} $y={9} aria-label="Recycle Bin">
            <RecycleBinLarge />
          </Shortcut>
          <Shortcut $x={76} $y={7} aria-label="Microsoft Edge">
            <EdgeLogo size={49} />
            <ShortcutArrow />
          </Shortcut>
          <Shortcut $x={151} $y={10} aria-label="Picture">
            <PictureFile />
          </Shortcut>
          <Shortcut $x={223} $y={10} aria-label="Document">
            <WordFile />
          </Shortcut>
          <Shortcut $x={1125} $y={12}>
            <OpenFolderLarge w={27} h={41} />
            Release
          </Shortcut>
          <BrowserWindow />
          <ArchiveWindow />
          <Explorer />
          <SortMark>
            <Chevron dir="up" size={9} color="#777" width={1.2} />
          </SortMark>
          <KeyDialog />
          <MessageBox />
          <Watermark>
            <span>ANY</span>
            <Svg w={56} h={64}>
              <path d="M4 52V10M12 46V4l38 24-38 24" stroke="rgba(0,0,0,0.100)" strokeWidth="8" strokeLinejoin="round" />
              <path d="M4 54V10M12 44V4l38 22-38 32" stroke="#fff" strokeOpacity="0.800" strokeWidth="4" strokeLinecap="round" strokeLinejoin="round" />
            </Svg>
            <span>RUN</span>
          </Watermark>
        </Desktop>
        <TaskbarView />
      </Screen>
    </>
  );
}
